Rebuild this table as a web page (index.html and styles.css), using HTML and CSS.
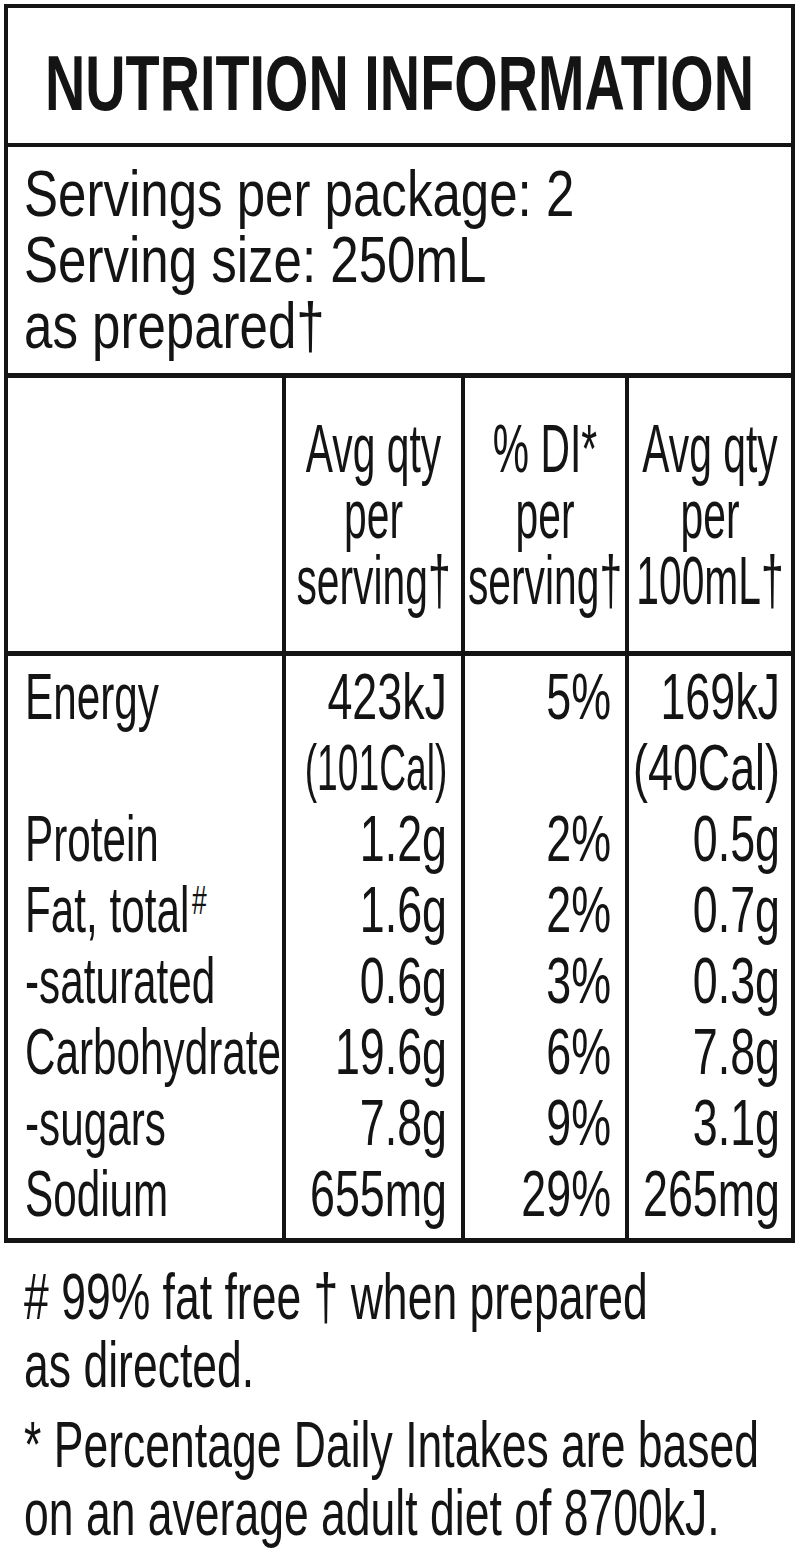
FILE: index.html
```html
<!DOCTYPE html>
<html lang="en">
<head>
<meta charset="utf-8">
<title>Nutrition Information</title>
<link rel="stylesheet" href="styles.css">
</head>
<body>
<div class="label">
  <div class="title"><div class="sq">NUTRITION INFORMATION</div></div>
  <div class="servings"><div class="sq">Servings per package: 2<br>Serving size: 250mL<br>as prepared†</div></div>
  <div class="grid">
    <div class="hd c1"></div>
    <div class="hd"><div class="sq">Avg qty<br>per<br>serving†</div></div>
    <div class="hd"><div class="sq">% DI*<br>per<br>serving†</div></div>
    <div class="hd"><div class="sq">Avg qty<br>per<br>100mL†</div></div>

    <div class="lb first"><div class="sq">Energy</div></div>
    <div class="v first"><div class="sq">423kJ<br><span class="tight">(101Cal)</span></div></div>
    <div class="v first"><div class="sq">5%</div></div>
    <div class="v first"><div class="sq">169kJ<br>(40Cal)</div></div>

    <div class="lb"><div class="sq">Protein</div></div>
    <div class="v"><div class="sq">1.2g</div></div>
    <div class="v"><div class="sq">2%</div></div>
    <div class="v"><div class="sq">0.5g</div></div>

    <div class="lb"><div class="sq">Fat, total<sup>#</sup></div></div>
    <div class="v"><div class="sq">1.6g</div></div>
    <div class="v"><div class="sq">2%</div></div>
    <div class="v"><div class="sq">0.7g</div></div>

    <div class="lb"><div class="sq">-saturated</div></div>
    <div class="v"><div class="sq">0.6g</div></div>
    <div class="v"><div class="sq">3%</div></div>
    <div class="v"><div class="sq">0.3g</div></div>

    <div class="lb"><div class="sq">Carbohydrate</div></div>
    <div class="v"><div class="sq">19.6g</div></div>
    <div class="v"><div class="sq">6%</div></div>
    <div class="v"><div class="sq">7.8g</div></div>

    <div class="lb"><div class="sq">-sugars</div></div>
    <div class="v"><div class="sq">7.8g</div></div>
    <div class="v"><div class="sq">9%</div></div>
    <div class="v"><div class="sq">3.1g</div></div>

    <div class="lb last"><div class="sq">Sodium</div></div>
    <div class="v last"><div class="sq">655mg</div></div>
    <div class="v last"><div class="sq">29%</div></div>
    <div class="v last"><div class="sq">265mg</div></div>
  </div>
</div>
<div class="notes">
  <div class="sq">
    <p># 99% fat free † when prepared<br>as directed.</p>
    <p>* Percentage Daily Intakes are based<br>on an average adult diet of 8700kJ.</p>
  </div>
</div>
</body>
</html>
```

FILE: styles.css
```css
html, body {
  margin: 0;
  padding: 0;
  background: #ffffff;
  overflow-x: hidden;
}
body {
  font-family: "Liberation Sans", Arial, sans-serif;
  color: #141414;
}
/* condensed type: glyphs squeezed horizontally, box width compensated */
.sq {
  --s: 0.7;
  width: calc(100% / var(--s));
  transform: scaleX(var(--s));
  transform-origin: left center;
  white-space: nowrap;
}
.label {
  box-sizing: border-box;
  width: 791px;
  margin: 4px 0 0 4px;
  border: 4px solid #141414;
  border-bottom-width: 5px;
}
.title {
  height: 103px;
  padding-top: 32px;
  border-bottom: 4px solid #141414;
}
.title .sq {
  --s: 0.725;
  text-align: center;
  font-weight: bold;
  font-size: 77px;
  line-height: 86px;
}
.servings {
  padding: 14px 0 14px 16px;
  border-bottom: 5px solid #141414;
}
.servings .sq {
  --s: 0.785;
  font-size: 65px;
  line-height: 66px;
}
.grid {
  display: grid;
  grid-template-columns: 274px 179px 164px 166px;
}
.hd {
  border-left: 4px solid #141414;
  border-bottom: 5px solid #141414;
  padding: 37px 0 38px;
  min-height: 198px;
}
.hd.c1 {
  border-left: none;
}
.hd .sq {
  --s: 0.6;
  text-align: center;
  font-size: 68px;
  line-height: 66px;
}
.lb {
  padding-left: 17px;
}
.lb .sq {
  --s: 0.66;
  font-size: 64px;
  line-height: 71px;
}
.v {
  border-left: 4px solid #141414;
  padding-right: 14px;
}
.v:nth-child(4n) {
  padding-right: 11px;
}
.v .sq {
  --s: 0.7;
  text-align: right;
  font-size: 64px;
  line-height: 71px;
}
.tight {
  display: inline-block;
  margin-left: -60px;
  transform: scaleX(0.83);
  transform-origin: right center;
}
.first {
  padding-top: 6px;
}
.last {
  padding-bottom: 8px;
}
.lb sup {
  font-size: 40px;
  line-height: 0;
  vertical-align: 18px;
  margin-left: 4px;
}
.notes {
  padding: 20px 0 0 24px;
}
.notes .sq {
  --s: 0.685;
  font-size: 65px;
  line-height: 68px;
}
.notes p {
  margin: 0 0 12px;
}
```
